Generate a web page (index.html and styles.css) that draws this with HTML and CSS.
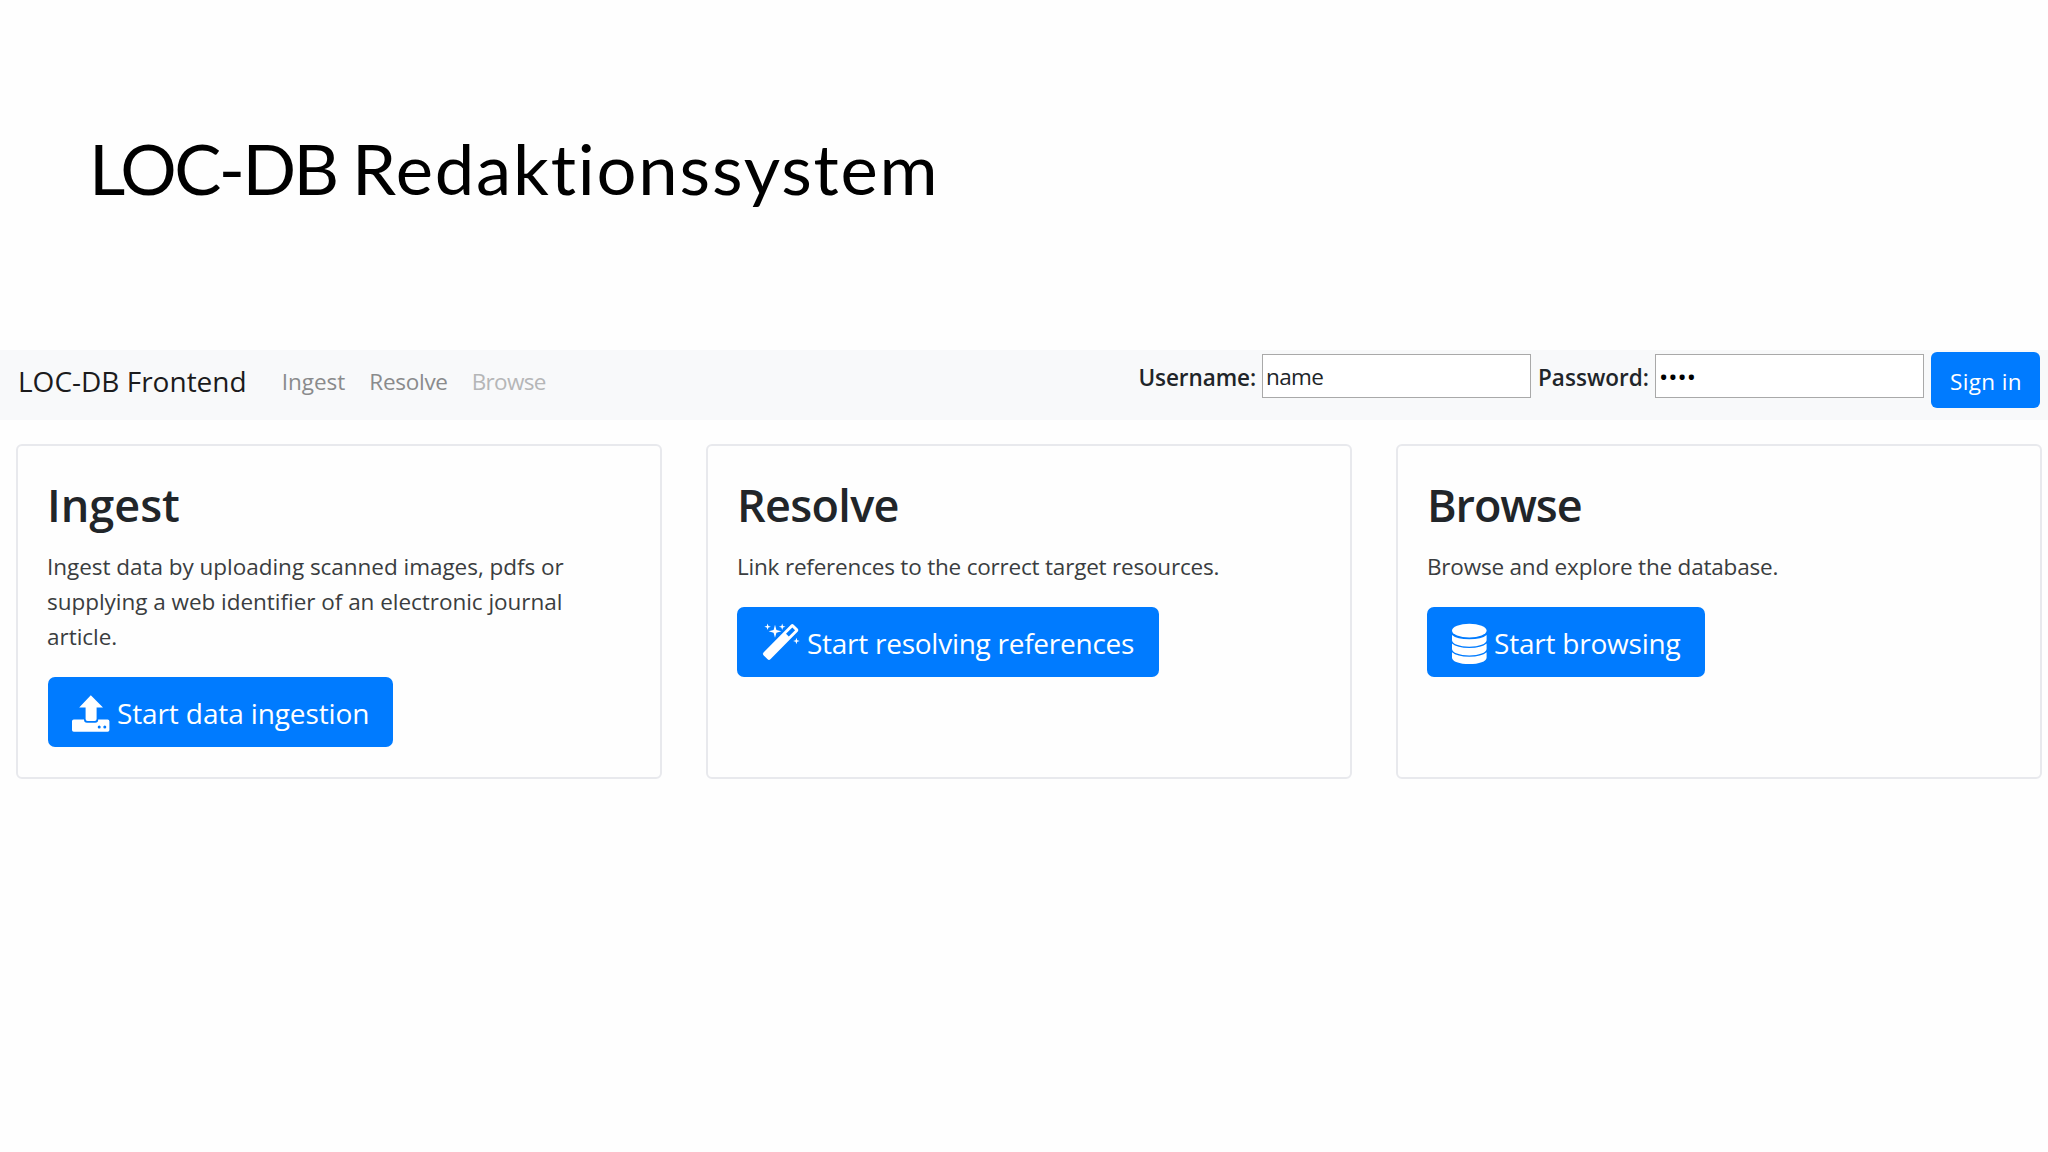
FILE: index.html
```html
<!DOCTYPE html>
<html lang="de">
<head>
    <meta charset="UTF-8">
    <meta name="viewport" content="width=device-width, initial-scale=1.0">
    <title>LOC-DB Redaktionssystem</title>
    <link rel="stylesheet" href="styles.css">
</head>
<body>
    <header class="title">
        <h1><span class="caps">LOC-DB </span>Redaktionssystem</h1>
    </header>

    <nav class="navbar">
        <a class="brand">LOC-DB Frontend</a>
        <div class="links">
            <a>Ingest</a>
            <a class="resolve">Resolve</a>
            <a class="disabled">Browse</a>
        </div>
        <form class="login">
            <label class="user" for="username">Username:</label>
            <input id="username" type="text" value="name">
            <label class="pass" for="password">Password:</label>
            <input id="password" type="password" value="name">
            <button type="button">Sign in</button>
        </form>
    </nav>

    <main class="cards">
        <section class="card ingest">
            <h2>Ingest</h2>
            <p>Ingest data by uploading scanned images, pdfs or supplying a web identifier of an electronic journal article.</p>
            <a class="btn">
                <svg class="icon" width="38" height="42" viewBox="0 0 38 42">
                    <path d="M18.8 2.2 L31 14.5 H24.6 V26 Q24.6 28 22.6 28 H15.6 Q13.6 28 13.6 26 V14.5 H7.2 Z"/>
                    <path fill-rule="evenodd" d="M1.8 26.5 H12 Q12 29.8 15 29.8 H23.2 Q26.2 29.8 26.2 26.5 H35.6 Q37.4 26.5 37.4 28.3 V37 Q37.4 38.8 35.6 38.8 H1.8 Q0 38.8 0 37 V28.3 Q0 26.5 1.8 26.5 Z M25.7 34 a1.5 1.5 0 1 0 3 0 a1.5 1.5 0 1 0 -3 0 Z M31.3 34 a1.5 1.5 0 1 0 3 0 a1.5 1.5 0 1 0 -3 0 Z"/>
                </svg>
                <span class="ingest-text">Start data ingestion</span>
            </a>
        </section>

        <section class="card">
            <h2 class="h2-resolve">Resolve</h2>
            <p>Link references to the correct target resources.</p>
            <a class="btn">
                <svg class="icon" width="38" height="42" viewBox="0 0 38 42">
                    <!-- stick -->
                    <path fill-rule="evenodd" d="M28.9 1.7 Q30.3 .5 31.7 1.7 L35.8 5.8 Q37 7.1 35.8 8.5 L8.4 36.3 Q7 37.6 5.6 36.3 L1.5 32.2 Q.2 30.8 1.5 29.4 Z M30.3 4.4 L24 10.7 L26.8 13.5 L33.1 7.2 Z"/>
                    <!-- sparkles -->
                    <path d="M13 1.8 L14.4 6.9 L19.4 8.3 L14.4 9.7 L13 14.8 L11.6 9.7 L6.6 8.3 L11.6 6.9 Z"/>
                    <path d="M5.6 .6 L6.4 3 L8.9 3.8 L6.4 4.6 L5.6 7 L4.8 4.6 L2.3 3.8 L4.8 3 Z"/>
                    <path d="M20.2 .6 L21 3 L23.5 3.8 L21 4.6 L20.2 7 L19.4 4.6 L16.9 3.8 L19.4 3 Z"/>
                    <path d="M34.4 14.8 L35.2 17.2 L37.7 18 L35.2 18.8 L34.4 21.2 L33.6 18.8 L31.1 18 L33.6 17.2 Z"/>
                </svg>
                <span class="resolve-text">Start resolving references</span>
            </a>
        </section>

        <section class="card">
            <h2 class="h2-browse">Browse</h2>
            <p>Browse and explore the database.</p>
            <a class="btn">
                <svg class="icon" width="35" height="42" viewBox="0 0 35 42">
                    <ellipse cx="17.3" cy="7.6" rx="17.3" ry="6.9"/>
                    <path d="M0 11.9 Q5 16.3 17.3 16.3 T34.6 11.9 V17.3 C34.6 21 27 23.7 17.3 23.7 S0 21 0 17.3 Z"/>
                    <path d="M0 20.6 Q5 25 17.3 25 T34.6 20.6 V26 C34.6 29.7 27 32.4 17.3 32.4 S0 29.7 0 26 Z"/>
                    <path d="M0 29.3 Q5 33.7 17.3 33.7 T34.6 29.3 V34.7 C34.6 38.4 27 41.1 17.3 41.1 S0 38.4 0 34.7 Z"/>
                </svg>
                <span class="browse-text">Start browsing</span>
            </a>
        </section>
    </main>
</body>
</html>
```

FILE: styles.css
```css
* {
    box-sizing: border-box;
}
body {
    margin: 0;
    background-color: #fefefe;
    color: #212529;
    font-family: "Open Sans", "Noto Sans", sans-serif;
    font-size: 22.5px;
    line-height: 35px;
}

/* title */
.title {
    height: 350px;
    padding: 123px 0 0 89px;
}
.title h1 {
    margin: 0;
    font-family: Lato, sans-serif;
    font-size: 70.6px;
    font-weight: 400;
    line-height: 90px;
    letter-spacing: 1.8px;
    color: #000;
}
.title .caps {
    letter-spacing: -2.6px;
}

/* navbar */
.navbar {
    display: flex;
    align-items: flex-start;
    height: 70px;
    padding: 0 8px 0 18px;
    background-color: #f8f9fa;
}
.brand {
    font-size: 28px;
    line-height: 62px;
    color: #1b1b1c;
}
.links {
    display: flex;
    gap: 24px;
    margin-left: 35px;
    line-height: 64px;
    color: #8a8b8c;
}
.links .resolve {
    letter-spacing: -0.28px;
}
.links .disabled {
    color: #b5b6b7;
    letter-spacing: -0.68px;
}
.login {
    display: flex;
    align-items: flex-start;
    margin-left: auto;
}
.login label {
    font-weight: 600;
    line-height: 56px;
    margin-right: 6px;
}
.login .user {
    letter-spacing: -0.09px;
}
.login .pass {
    letter-spacing: 0.03px;
}
.login input {
    width: 269px;
    height: 44px;
    margin: 4px 7px 0 0;
    padding: 1px 0 0 3px;
    border: 1px solid #a9a9a9;
    background-color: #fff;
    color: #212529;
    font-family: inherit;
    font-size: 22.5px;
    letter-spacing: -0.6px;
}
#password {
    padding-top: 0;
    font-size: 24.5px;
    letter-spacing: 0;
    color: #000;
}
.login button {
    width: 109px;
    height: 56px;
    margin-top: 2px;
    padding: 3px 0 0 1px;
    border: 0;
    border-radius: 6px;
    background-color: #007bff;
    color: #fff;
    font-family: inherit;
    font-size: 22.5px;
    letter-spacing: 0.4px;
}

/* cards */
.cards {
    display: grid;
    grid-template-columns: repeat(3, 646px);
    column-gap: 44px;
    padding: 24px 0 0 16px;
}
.card {
    height: 335px;
    padding: 32px 60px 0 29px;
    border: 2px solid #e8e9ed;
    border-radius: 6px;
}
.card h2 {
    margin: 0 0 17px;
    font-size: 45px;
    font-weight: 600;
    line-height: 54px;
}
.card .h2-resolve {
    letter-spacing: -0.67px;
}
.card .h2-browse {
    letter-spacing: -1.1px;
}
.card p {
    margin: 0 0 23px;
    color: #3a3d40;
    letter-spacing: -0.2px;
}
.ingest p {
    letter-spacing: -0.03px;
}
.btn {
    display: inline-flex;
    height: 70px;
    padding: 0 25px 0 24px;
    border-radius: 7px;
    background-color: #007bff;
    color: #fff;
    font-size: 28px;
    line-height: 73px;
    white-space: nowrap;
}
.ingest .btn {
    padding-right: 24px;
    margin-left: 1px;
}
.icon {
    margin: 16px 7px 0 1px;
    fill: #fff;
}
.ingest .icon {
    margin-left: 0;
}
.ingest-text {
    letter-spacing: -0.12px;
}
.resolve-text {
    letter-spacing: -0.26px;
}
.browse-text {
    letter-spacing: -0.22px;
}
```
